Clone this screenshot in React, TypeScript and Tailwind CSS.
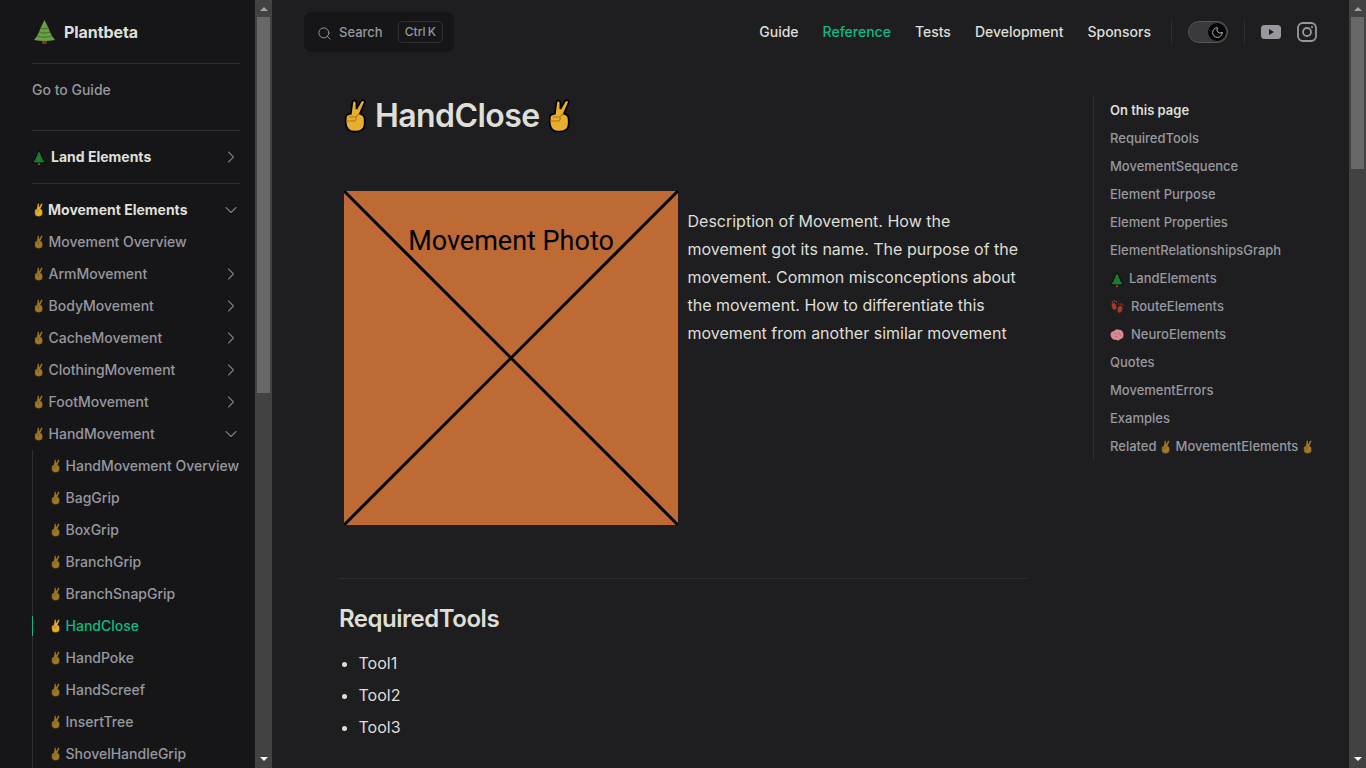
import { ChevronDown, ChevronRight, Search, Moon } from 'lucide-react';

const FONT = "font-['Inter',sans-serif]";

function Victory({ size = 14, dim = false, outline = 2 }: { size?: number; dim?: boolean; outline?: number }) {
  return (
    <svg
      width={size * 0.67}
      height={size}
      viewBox="0 0 66 102"
      preserveAspectRatio="none"
      className={`block ${dim ? 'opacity-65' : ''}`}
    >
      <path
        d="M20 44 L24 11 Q25 4 30 4 Q36 5 36 12 L36 30 L48 8 Q52 2 57 4 Q62 7 59 13 L46 44 Q60 47 60 62 L60 74 Q60 98 32 98 Q6 98 5 72 L5 56 Q5 46 20 44 Z"
        fill="#e8ae2f"
        stroke="#000"
        strokeWidth={outline}
      />
      <path d="M6 66 L30 66 Q38 62 34 54 L14 54 M34 54 L45 44" fill="none" stroke="#a87412" strokeWidth="3" />
    </svg>
  );
}

// emoji slot: keeps the hand centred in the width a text emoji would take
function Emoji({ dim = false }: { dim?: boolean }) {
  return (
    <span className="w-[13px] shrink-0 flex justify-center">
      <Victory dim={dim} />
    </span>
  );
}

function BigTree() {
  return (
    <svg width="21" height="24" viewBox="0 0 21 24" className="shrink-0">
      <rect x="8" y="19" width="5" height="5" rx="1" fill="#7a3522" />
      <path d="M10.500 0 L14 7 L16 12 L18 16 L21 20 Q10.500 22 0 20 L3 16 L5 12 L7 7 Z" fill="#6b9e45" />
      <path d="M7 8 Q10.500 10 14 8 M5 12 Q10.500 14 16 12 M3 16 Q10.500 18.500 18 16" fill="none" stroke="#3f7a33" strokeWidth="1.300" />
    </svg>
  );
}

function SmallTree() {
  return (
    <svg width="14" height="15" viewBox="0 0 14 15" className="shrink-0">
      <rect x="6" y="11" width="2" height="4" fill="#b04e28" />
      <path d="M7 0.500 L9.500 5 L9 5 L11 8.500 L10.500 8.500 L13.500 12.500 Q7 13.500 0.500 12.500 L3.500 8.500 L3 8.500 L5 5 L4.500 5 Z" fill="#1d7a33" stroke="#000" strokeWidth="0.800" />
    </svg>
  );
}

function Feet() {
  return (
    <svg width="14" height="14" viewBox="0 0 24 24" className="inline-block shrink-0">
      <g fill="#a33a22">
        <ellipse cx="7" cy="11" rx="4" ry="6" transform="rotate(-15 7 11)" />
        <ellipse cx="17" cy="16" rx="4" ry="6" transform="rotate(15 17 16)" />
        <circle cx="4" cy="3" r="1.500" />
        <circle cx="8" cy="2" r="1.500" />
        <circle cx="11" cy="3" r="1.300" />
        <circle cx="15" cy="7" r="1.300" />
        <circle cx="19" cy="7" r="1.500" />
        <circle cx="22" cy="9" r="1.300" />
      </g>
    </svg>
  );
}

function Brain() {
  return (
    <svg width="14" height="14" viewBox="0 0 24 24" className="inline-block shrink-0">
      <path d="M1 13 Q0 6 7 5 Q10 1 15 3 Q22 3 23 10 Q24 18 18 19 Q14 23 10 20 Q3 21 1 13 Z" fill="#d98a96" />
      <path d="M7 10 Q10 8 12 11 M14 8 Q17 9 18 13 M8 15 Q11 13 14 16" fill="none" stroke="#a85a68" strokeWidth="1.200" />
    </svg>
  );
}

function Scrollbar({ thumbHeight }: { thumbHeight: string }) {
  return (
    <div className="w-[17px] shrink-0 h-full bg-[#424242] flex flex-col">
      <div className="h-[17px] flex items-center justify-center">
        <div className="w-0 h-0 border-x-[4px] border-x-transparent border-b-[4px] border-b-[#a3a3a3]" />
      </div>
      <div className={`${thumbHeight} mx-[2px] bg-[#686868]`} />
      <div className="flex-1" />
      <div className="h-[17px] flex items-center justify-center pb-[2px]">
        <div className="w-0 h-0 border-x-[4px] border-x-transparent border-t-[4px] border-t-white" />
      </div>
    </div>
  );
}

const movementItems = ['ArmMovement', 'BodyMovement', 'CacheMovement', 'ClothingMovement', 'FootMovement'];
const handItems = ['HandMovement Overview', 'BagGrip', 'BoxGrip', 'BranchGrip', 'BranchSnapGrip', 'HandClose', 'HandPoke', 'HandScreef', 'InsertTree', 'ShovelHandleGrip'];

function Sidebar() {
  return (
    <aside className="w-[272px] shrink-0 h-full flex bg-[#161618]">
      <div className="w-[255px] shrink-0 h-full overflow-hidden pl-8 pr-[15px]">
        <div className="h-16 flex items-center gap-[9px] border-b border-[#2e2e32] pl-[2px]">
          <BigTree />
          <span className="text-base font-bold text-[#dfdfd7] tracking-[-0.005em]">Plantbeta</span>
        </div>

        <div className="pt-[10px] pb-6 border-b border-[#2e2e32] h-[67px]">
          <div className="h-8 flex items-center text-sm font-medium text-[#98989f]">Go to Guide</div>
        </div>

        <div className="h-[53px] flex items-center justify-between border-b border-[#2e2e32]">
          <div className="flex items-center gap-[5px] text-sm font-bold text-[#dfdfd7]">
            <SmallTree />
            Land Elements
          </div>
          <ChevronRight size={20} strokeWidth={1.300} className="text-[#7a7a80] -mr-px" />
        </div>

        <div className="pt-[10px]">
          <div className="h-8 flex items-center justify-between">
            <div className="flex items-center gap-[3px] text-sm font-bold text-[#dfdfd7]">
              <Emoji />
              Movement Elements
            </div>
            <ChevronDown size={20} strokeWidth={1.300} className="text-[#7a7a80] -mr-px" />
          </div>
        </div>

        <div className="h-8 flex items-center gap-[3.500px] text-sm font-medium text-[#98989f]">
          <Emoji dim />
          Movement Overview
        </div>
        {movementItems.map((item) => (
          <div key={item} className="h-8 flex items-center justify-between text-sm font-medium text-[#98989f]">
            <div className="flex items-center gap-[3.500px]">
              <Emoji dim />
              {item}
            </div>
            <ChevronRight size={20} strokeWidth={1.300} className="text-[#7a7a80] -mr-px" />
          </div>
        ))}
        <div className="h-8 flex items-center justify-between text-sm font-medium text-[#98989f]">
          <div className="flex items-center gap-[3.500px]">
            <Emoji dim />
            HandMovement
          </div>
          <ChevronDown size={20} strokeWidth={1.300} className="text-[#7a7a80] -mr-px" />
        </div>

        <div className="border-l border-[#2e2e32] -mr-2">
          {handItems.map((item) => {
            const active = item === 'HandClose';
            return (
              <div key={item} className="relative h-8 pl-4 flex items-center gap-[3.500px] text-sm font-medium whitespace-nowrap">
                {active && <div className="absolute -left-px top-[6px] h-5 w-px bg-[#10b981]" />}
                <Emoji dim={!active} />
                <span className={active ? 'text-[#10b981]' : 'text-[#98989f]'}>{item}</span>
              </div>
            );
          })}
        </div>
      </div>
      <Scrollbar thumbHeight="h-[376px]" />
    </aside>
  );
}

function Header() {
  const links = ['Guide', 'Reference', 'Tests', 'Development', 'Sponsors'];
  return (
    <header className="h-16 flex items-center pl-8 pr-8">
      <div className="w-[150px] h-10 rounded-lg bg-[#161618] flex items-center pl-[13px] pr-[11px]">
        <Search size={15} strokeWidth={1.500} className="text-[#98989f] mt-[2px]" />
        <span className="ml-[7px] mt-[2px] text-[13px] font-medium text-[#98989f]">Search</span>
        <span className="ml-auto h-[22px] px-[6px] flex items-center rounded border border-[#2e2e32] text-xs font-medium text-[#98989f] [word-spacing:-1px]">
          Ctrl K
        </span>
      </div>
      <nav className="ml-auto flex items-center gap-6 text-sm font-medium text-[#dfdfd7]">
        {links.map((link) => (
          <span key={link} className={link === 'Reference' ? 'text-[#10b981]' : ''}>{link}</span>
        ))}
      </nav>
      <div className="ml-5 h-6 w-px bg-[#2e2e32]" />
      <div className="ml-4 w-10 h-[22px] rounded-full bg-[#3a3a3e] border border-[#55555a] relative">
        <div className="absolute right-px top-px w-[18px] h-[18px] rounded-full bg-black flex items-center justify-center">
          <Moon size={13} strokeWidth={1.500} className="text-[#dfdfd7]" />
        </div>
      </div>
      <div className="ml-4 h-6 w-px bg-[#2e2e32]" />
      <svg width="20" height="14" viewBox="0 0 20 14" className="ml-4">
        <rect width="20" height="14" rx="3.500" fill="#98989f" />
        <path d="M8 4 L13 7 L8 10 Z" fill="#1e1e20" />
      </svg>
      <svg width="20" height="20" viewBox="0 0 20 20" fill="none" stroke="#98989f" className="ml-[16px]" strokeWidth="1.800">
        <rect x="1" y="1" width="18" height="18" rx="5" />
        <circle cx="10" cy="10" r="4" />
        <circle cx="15" cy="5" r="0.800" fill="#98989f" strokeWidth="0.800" />
      </svg>
    </header>
  );
}

const outline = ['RequiredTools', 'MovementSequence', 'Element Purpose', 'Element Properties', 'ElementRelationshipsGraph'];

function OnThisPage() {
  const row = 'h-7 flex items-center text-[13px] font-medium text-[#98989f] whitespace-nowrap';
  return (
    <div className="w-[256px] shrink-0 border-l border-[#2e2e32] self-start pl-4 pt-px mt-8 h-[364px]">
      <div className="h-7 flex items-center text-[13px] font-semibold text-[#dfdfd7]">On this page</div>
      {outline.map((item) => (
        <div key={item} className={row}>{item}</div>
      ))}
      <div className={`${row} gap-[5px]`}><SmallTree /> LandElements</div>
      <div className={`${row} gap-[7px]`}><Feet /> RouteElements</div>
      <div className={`${row} gap-[7px]`}><Brain /> NeuroElements</div>
      <div className={row}>Quotes</div>
      <div className={row}>MovementErrors</div>
      <div className={row}>Examples</div>
      <div className={`${row} gap-[3px]`}>Related <Emoji dim /> MovementElements <Emoji dim /></div>
    </div>
  );
}

function MovementPhoto() {
  return (
    <svg width="334" height="334" viewBox="0 0 334 334" className="shrink-0">
      <rect width="334" height="334" rx="3" fill="#bd6a35" />
      <path d="M0 0 L334 334 M334 0 L0 334" stroke="#000" strokeWidth="3" />
      <text x="167" y="58.500" textAnchor="middle" fontSize="27" fill="#000" fontFamily="Roboto, sans-serif">Movement Photo</text>
    </svg>
  );
}

function Article() {
  return (
    <article className="w-[688px] shrink-0 text-[#dfdfd7]">
      <h1 className="h-[40px] flex items-center gap-1 text-[32px] font-semibold tracking-[-0.018em] mt-8">
        <span className="w-8 flex justify-center"><Victory size={34} outline={5} /></span>
        HandClose
        <span className="w-8 flex justify-center"><Victory size={34} outline={5} /></span>
      </h1>
      <div className="flex pl-[5px] mt-[55px]">
        <MovementPhoto />
        <p className="ml-[9.500px] pt-4 text-base leading-7 w-[340px]">
          Description of Movement. How the movement got its name. The purpose of the movement. Common misconceptions about the movement. How to differentiate this movement from another similar movement
        </p>
      </div>
      <div className="mt-[53px] border-t border-[#2e2e32]" />
      <h2 className="mt-6 text-2xl font-semibold tracking-[-0.02em] leading-8">RequiredTools</h2>
      <ul className="mt-3 list-disc pl-[19.500px] text-base">
        <li className="h-8 leading-8">Tool1</li>
        <li className="h-8 leading-8">Tool2</li>
        <li className="h-8 leading-8">Tool3</li>
      </ul>
    </article>
  );
}

export default function App() {
  return (
    <div className={`h-[768px] w-[1366px] overflow-hidden flex bg-[#1e1e20] ${FONT}`}>
      <Sidebar />
      <main className="flex-1 min-w-0 h-full flex flex-col overflow-hidden">
        <Header />
        <div className="flex pl-[67px]">
          <Article />
          <div className="w-[66px] shrink-0" />
          <OnThisPage />
        </div>
      </main>
      <Scrollbar thumbHeight="h-[152px]" />
    </div>
  );
}
